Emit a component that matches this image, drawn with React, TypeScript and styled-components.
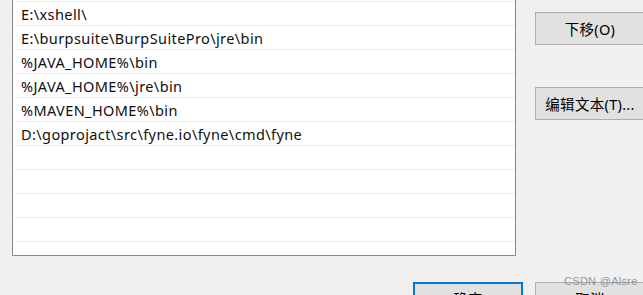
import React from 'react'
import styled, { createGlobalStyle } from 'styled-components'

const GlobalStyle = createGlobalStyle`
  html, body {
    margin: 0;
    padding: 0;
    background: #F0F0F0;
  }
  body {
    font-family: "Noto Sans", "Noto Sans CJK SC", sans-serif;
    font-size: 14px;
    color: #000000;
  }
`

const Dialog = styled.div`
  position: relative;
  width: 643px;
  height: 295px;
  overflow: hidden;
  background: #F0F0F0;
`
const Main = styled.div`
  display: flex;
  padding-left: 12px;
  gap: 19px;
`
const ListBox = styled.div`
  width: 502px;
  height: 254px;
  padding-top: 1px;
  box-sizing: content-box;
  flex-shrink: 0;
  background: #FFFFFF;
  border: 1px solid #828790;
  border-top: none;
  overflow: hidden;
`
const Row = styled.div`
  height: 23px;
  margin-left: 1px;
  border-top: 1px solid #EDEDED;
  padding-left: 7px;
  display: flex;
  align-items: center;
  white-space: nowrap;
  font-size: 14.5px;
  letter-spacing: 0.4px;
  line-height: 22px;
  color: #101010;
`
const Side = styled.div`
  display: flex;
  flex-direction: column;
  flex-shrink: 0;
  padding-top: 12px;
  gap: 42px;
`
const Button = styled.div<{ $primary?: boolean }>`
  width: ${p => (p.$primary ? 106 : 108)}px;
  height: ${p => (p.$primary ? 29 : 31)}px;
  border: ${p => (p.$primary ? '2px solid #0078D7' : '1px solid #ADADAD')};
  background: #E1E1E1;
  display: flex;
  align-items: center;
  justify-content: center;
  font-size: 14.5px;
  letter-spacing: 0.3px;
  flex-shrink: 0;
`
const Footer = styled.div`
  display: flex;
  padding-left: 413px;
  margin-top: 26px;
  gap: 12px;
`
const Watermark = styled.div`
  position: absolute;
  left: 564px;
  top: 275px;
  font-family: "Liberation Sans", sans-serif;
  font-size: 11px;
  color: rgba(120, 120, 120, 0.75);
  letter-spacing: 0.3px;
`

const paths = [
  'E:\\xshell\\',
  'E:\\burpsuite\\BurpSuitePro\\jre\\bin',
  '%JAVA_HOME%\\bin',
  '%JAVA_HOME%\\jre\\bin',
  '%MAVEN_HOME%\\bin',
  'D:\\goprojact\\src\\fyne.io\\fyne\\cmd\\fyne',
  '', '', '', '', '',
]

export default function App() {
  return (
    <Dialog>
      <GlobalStyle />
      <Main>
        <ListBox>
          {paths.map((p, i) => (
            <Row key={i}>{p}</Row>
          ))}
        </ListBox>
        <Side>
          <Button>下移(O)</Button>
          <Button>编辑文本(T)...</Button>
        </Side>
      </Main>
      <Footer>
        <Button $primary>确定</Button>
        <Button>取消</Button>
      </Footer>
      <Watermark>CSDN @Alsre</Watermark>
    </Dialog>
  )
}
